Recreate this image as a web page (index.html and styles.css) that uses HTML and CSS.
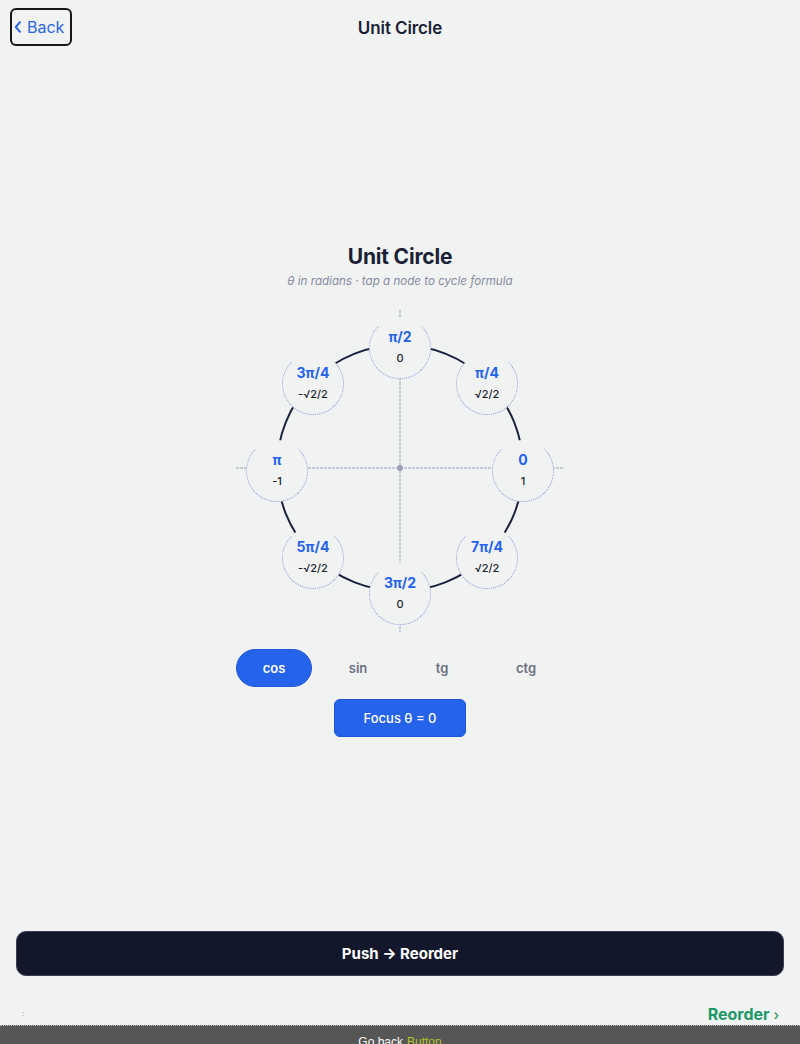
FILE: index.html
```html
<!DOCTYPE html>
<html lang="en">
<head>
<meta charset="utf-8">
<title>Unit Circle</title>
<link rel="stylesheet" href="styles.css">
</head>
<body>
<div class="page">
  <header class="nav">
    <div class="nav-left">
      <button class="back-btn" type="button">
        <svg class="chev" width="8" height="12" viewBox="0 0 8 12" aria-hidden="true"><path d="M6 1.2 L1.8 6 L6 10.8" fill="none" stroke="currentColor" stroke-width="2" stroke-linecap="round" stroke-linejoin="round"/></svg>
        <span>Back</span>
      </button>
    </div>
    <div class="nav-title">Unit Circle</div>
    <div class="nav-right"></div>
  </header>

  <main class="main">
    <h2 class="title">Unit Circle</h2>
    <p class="subtitle">θ in radians · tap a node to cycle formula</p>

    <div class="diagram">
      <svg class="plane" width="330" height="330" viewBox="0 0 330 330" aria-hidden="true">
        <line x1="1" y1="165" x2="328" y2="165" class="axis"/>
        <line x1="165" y1="7" x2="165" y2="329" class="axis"/>
        <circle cx="165" cy="165" r="123" class="ring"/>
        <circle cx="165" cy="165" r="3" class="origin"/>
      </svg>

      <div class="node" style="left:134px;top:14px"><b>π/2</b><span>0</span></div>
      <div class="node" style="left:221px;top:50px"><b>π/4</b><span>√2/2</span></div>
      <div class="node" style="left:257px;top:137px"><b>0</b><span>1</span></div>
      <div class="node" style="left:221px;top:224px"><b>7π/4</b><span>√2/2</span></div>
      <div class="node" style="left:134px;top:260px"><b>3π/2</b><span>0</span></div>
      <div class="node" style="left:47px;top:224px"><b>5π/4</b><span>-√2/2</span></div>
      <div class="node" style="left:11px;top:137px"><b>π</b><span>-1</span></div>
      <div class="node" style="left:47px;top:50px"><b>3π/4</b><span>-√2/2</span></div>
    </div>

    <div class="tabs">
      <button class="tab active" type="button">cos</button>
      <button class="tab" type="button">sin</button>
      <button class="tab" type="button">tg</button>
      <button class="tab" type="button">ctg</button>
    </div>

    <button class="focus-btn" type="button">Focus θ = 0</button>
  </main>

  <div class="actions">
    <button class="push-btn" type="button">Push → Reorder</button>
  </div>

  <div class="link-row">
    <span class="tick">:</span>
    <a class="next-link" href="#">Reorder <span class="arrow">›</span></a>
  </div>

  <div class="bottom-bar">
    <span class="bar-text">Go back</span>
    <span class="bar-kind">Button</span>
  </div>
</div>
</body>
</html>
```

FILE: styles.css
```css
* {
  box-sizing: border-box;
}

html, body {
  margin: 0;
  padding: 0;
  background: #f1f2f2;
}

body {
  font-family: Inter, "Noto Sans", "Liberation Sans", sans-serif;
  color: #1a1f36;
  overflow: hidden;
}

button {
  font-family: inherit;
  cursor: pointer;
}

.page {
  display: flex;
  flex-direction: column;
  height: 1044px;
}

/* top navigation bar */
.nav {
  height: 55px;
  display: grid;
  grid-template-columns: 1fr auto 1fr;
  align-items: center;
}

.nav-left {
  padding-left: 10px;
}

.back-btn {
  display: flex;
  align-items: center;
  gap: 5px;
  width: 62px;
  height: 38px;
  padding: 0 0 0 2px;
  border: 2px solid #171717;
  border-radius: 6px;
  background: transparent;
  color: #2a66e0;
  font-size: 16px;
  line-height: 20px;
  margin-top: -1px;
}

.chev {
  display: block;
}

.nav-title {
  font-size: 17px;
  font-weight: 600;
  color: #1a1f36;
  letter-spacing: -0.1px;
}

/* centred content */
.main {
  flex: 1;
  display: flex;
  flex-direction: column;
  align-items: center;
  justify-content: center;
  padding-bottom: 6px;
}

.title {
  margin: 0;
  font-size: 21px;
  line-height: 28px;
  font-weight: 700;
  color: #1a1f36;
  letter-spacing: -0.2px;
}

.subtitle {
  margin: 2px 0 0;
  font-size: 11.6px;
  line-height: 16px;
  font-style: italic;
  color: #878c9f;
}

.diagram {
  position: relative;
  width: 330px;
  height: 330px;
  margin-top: 14px;
}

.plane {
  display: block;
}

.axis {
  stroke: #9aa0b8;
  stroke-width: 1;
  stroke-dasharray: 3 1;
}

.ring {
  fill: none;
  stroke: #1c2340;
  stroke-width: 2;
}

.origin {
  fill: #9ca1b5;
}

.node {
  position: absolute;
  width: 62px;
  height: 62px;
  border-radius: 50%;
  background: #f1f2f2;
  border: 1px dotted #8a90d6;
  border-top-color: transparent;
  display: flex;
  flex-direction: column;
  align-items: center;
  justify-content: center;
  gap: 5px;
  padding-bottom: 4px;
}

.node b {
  font-size: 14px;
  line-height: 18px;
  font-weight: 700;
  color: #2563eb;
}

.node span {
  font-size: 11px;
  line-height: 14px;
  font-weight: 500;
  color: #1a1f2e;
}

.tabs {
  display: flex;
  gap: 8px;
  margin-top: 16px;
}

.tab {
  width: 76px;
  height: 38px;
  border: none;
  border-radius: 19px;
  background: transparent;
  color: #6b7183;
  font-size: 13px;
  font-weight: 600;
}

.tab.active {
  background: #2563eb;
  color: #ffffff;
  border: 1px solid #2459d6;
}

.focus-btn {
  margin-top: 12px;
  width: 132px;
  height: 38px;
  border-radius: 6px;
  border: 1px solid #1f55d4;
  background: #2563eb;
  color: #ffffff;
  font-size: 13px;
  font-weight: 500;
}

/* footer actions */
.actions {
  padding: 0 16px;
}

.push-btn {
  display: block;
  width: 100%;
  height: 45px;
  border-radius: 10px;
  border: 1px solid #3a3f55;
  background: #12172b;
  color: #ffffff;
  font-size: 15px;
  font-weight: 700;
}

.link-row {
  height: 49px;
  display: flex;
  align-items: flex-end;
  justify-content: space-between;
  padding: 0 21px 0 22px;
}

.tick {
  font-size: 7px;
  line-height: 10px;
  color: #8a90b0;
  margin-bottom: 6px;
}

.next-link {
  font-size: 16px;
  line-height: 20px;
  font-weight: 700;
  color: #1f9868;
  text-decoration: none;
}

.next-link .arrow {
  font-weight: 500;
  font-size: 14px;
}

.bottom-bar {
  height: 19px;
  background: #565656;
  border-top: 1px dotted #b9b9b9;
  overflow: hidden;
  display: flex;
  justify-content: center;
  gap: 4px;
  padding-top: 8px;
  font-size: 12px;
  line-height: 16px;
  font-family: "Liberation Sans", Arial, sans-serif;
}

.bar-text {
  color: #ffffff;
}

.bar-kind {
  color: #b6c42a;
}
```
